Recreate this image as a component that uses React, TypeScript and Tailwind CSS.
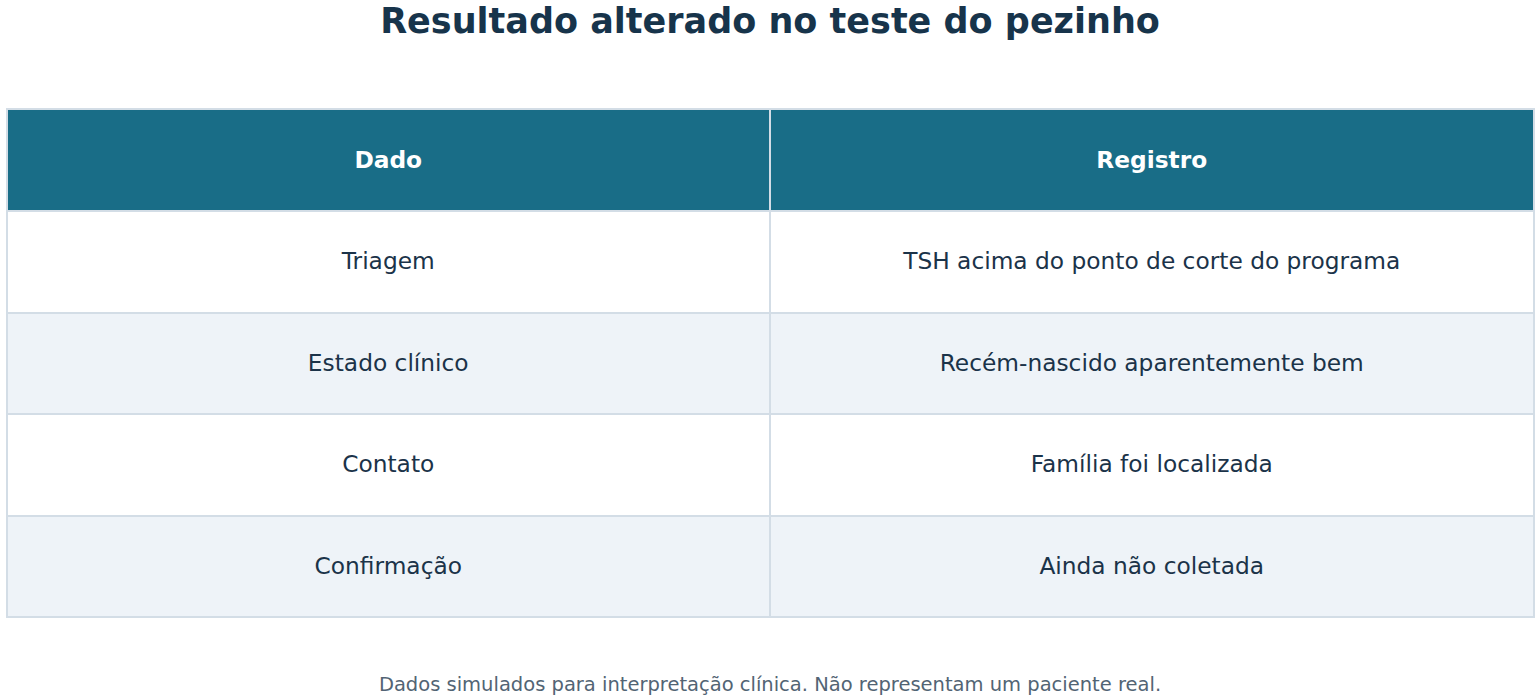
const rows = [
  { dado: "Triagem", registro: "TSH acima do ponto de corte do programa" },
  { dado: "Estado clínico", registro: "Recém-nascido aparentemente bem" },
  { dado: "Contato", registro: "Família foi localizada" },
  { dado: "Confirmação", registro: "Ainda não coletada" },
];

export default function App() {
  return (
    <div className="w-[1540px] h-[700px] bg-white font-['DejaVu_Sans',sans-serif] overflow-hidden">
      {/* Title */}
      <h1 className="text-center text-[35px] font-bold leading-[43px] text-[#17344b]">
        Resultado alterado no teste do pezinho
      </h1>

      {/* Table */}
      <div className="mt-[65px] ml-[6px] w-[1529px] border-2 border-[#d3dde6]">
        <div className="grid grid-cols-2 h-[100px] bg-[#196d87] text-white text-[23.3px] font-bold">
          <div className="flex items-center justify-center border-r-2 border-[#d3dde6]">Dado</div>
          <div className="flex items-center justify-center">Registro</div>
        </div>
        {rows.map((row, i) => (
          <div
            key={row.dado}
            className={`grid grid-cols-2 h-[101.5px] border-t-2 border-[#d3dde6] text-[23.3px] text-[#1b3349] ${
              i % 2 === 1 ? "bg-[#eef3f8]" : "bg-white"
            }`}
          >
            <div className="flex items-center justify-center border-r-2 border-[#d3dde6]">{row.dado}</div>
            <div className="flex items-center justify-center">{row.registro}</div>
          </div>
        ))}
      </div>

      {/* Footer note */}
      <p className="mt-[55px] text-center text-[19.5px] leading-[23px] text-[#526474]">
        Dados simulados para interpretação clínica. Não representam um paciente real.
      </p>
    </div>
  );
}
